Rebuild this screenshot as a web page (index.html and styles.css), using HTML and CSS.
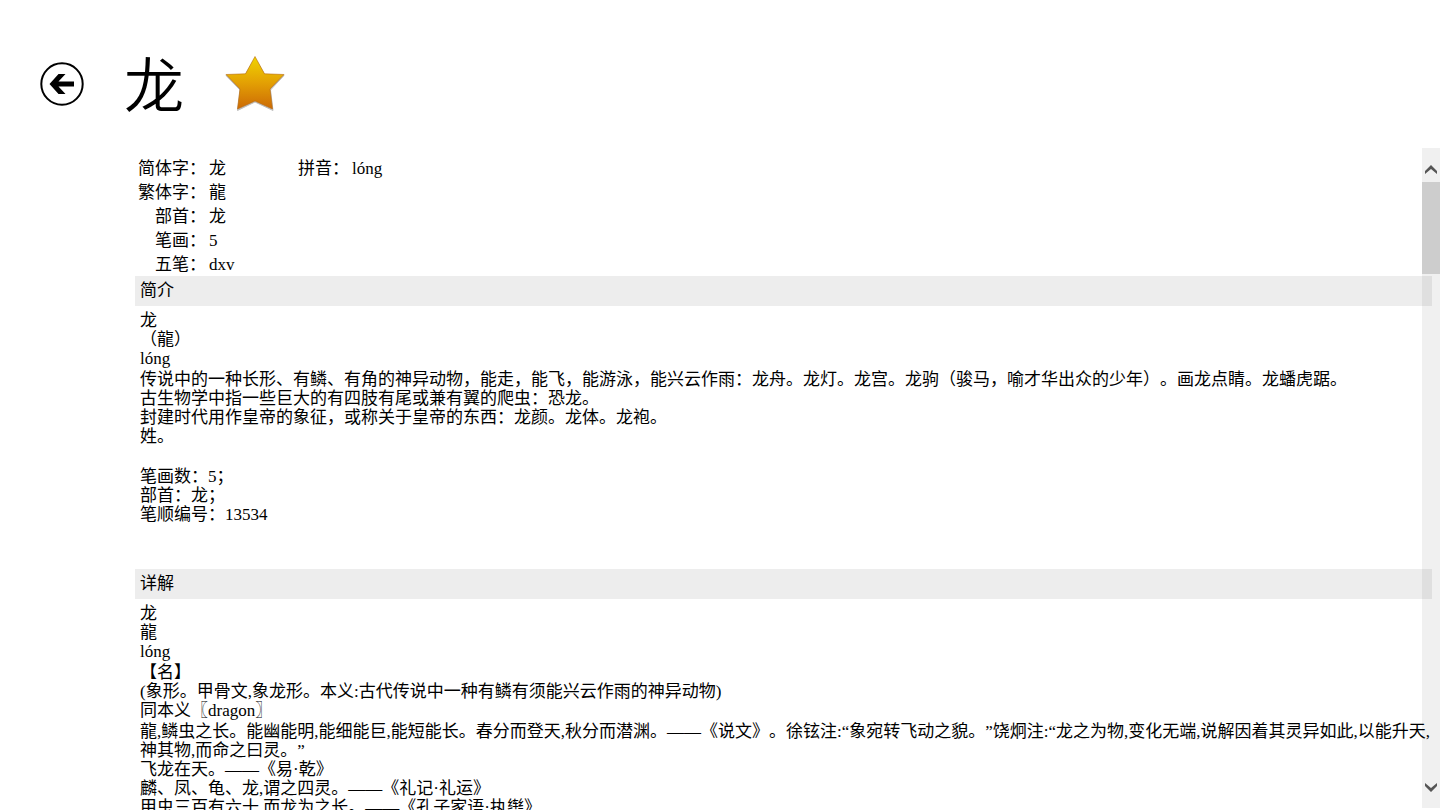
FILE: index.html
```html
<!DOCTYPE html>
<html lang="zh-CN">
<head>
    <meta charset="UTF-8">
    <meta name="viewport" content="width=device-width, initial-scale=1.0">
    <title>龙</title>
    <link rel="stylesheet" href="styles.css">
</head>
<body>
    <header class="page-header">
        <button class="icon-button" type="button" aria-label="返回">
            <svg width="44" height="44" viewBox="0 0 44 44">
                <circle cx="22" cy="22" r="20.7" fill="none" stroke="#000" stroke-width="2"/>
                <path d="M9.500 22 18.500 12H25.500L18.500 19.500H34V24.500H18.500L25.500 32H18.500Z"/>
            </svg>
        </button>
        <h1 class="page-title">龙</h1>
        <button class="icon-button" type="button" aria-label="收藏">
            <svg width="62" height="58" viewBox="0 0 62 58">
                <defs>
                    <linearGradient id="gold" x1="0" y1="0" x2="0" y2="1">
                        <stop offset="0" stop-color="#f0d400"/>
                        <stop offset="0.5" stop-color="#e3a004"/>
                        <stop offset="1" stop-color="#cc6a06"/>
                    </linearGradient>
                </defs>
                <path d="M31 3 41 20 60 20.500 46.500 35 49 55.500 31 47 13.500 55.500 16 35 2 20.500 21 20Z" fill="#000" opacity="0.25" stroke="#000" stroke-width="1" stroke-linejoin="round"/>
                <path d="M31 1.500 40.500 18.800 60 19.500 46 34 48.500 54 31 46 13.500 54 16 34 2 19.500 21.500 18.800Z" fill="url(#gold)" stroke="#b96a10" stroke-opacity="0.6" stroke-width="1" stroke-linejoin="round"/>
            </svg>
        </button>
    </header>

    <main class="content">
        <table class="info">
            <tr>
                <th>简体字：</th>
                <td>龙</td>
                <th>拼音：</th>
                <td>lóng</td>
            </tr>
            <tr>
                <th>繁体字：</th>
                <td>龍</td>
            </tr>
            <tr>
                <th>部首：</th>
                <td>龙</td>
            </tr>
            <tr>
                <th>笔画：</th>
                <td>5</td>
            </tr>
            <tr>
                <th>五笔：</th>
                <td>dxv</td>
            </tr>
        </table>

        <section class="entry">
            <h2>简介</h2>
            <div class="entry-text">
                <p>龙<br>（龍）<br>lóng</p>
                <p>传说中的一种长形、有鳞、有角的神异动物，能走，能飞，能游泳，能兴云作雨：龙舟。龙灯。龙宫。龙驹（骏马，喻才华出众的少年）。画龙点睛。龙蟠虎踞。<br>古生物学中指一些巨大的有四肢有尾或兼有翼的爬虫：恐龙。<br>封建时代用作皇帝的象征，或称关于皇帝的东西：龙颜。龙体。龙袍。<br>姓。</p>
                <p class="strokes">笔画数：5；<br>部首：龙；<br>笔顺编号：13534</p>
            </div>
        </section>

        <section class="entry">
            <h2>详解</h2>
            <div class="entry-text">
                <p>龙<br>龍<br>lóng</p>
                <p>【名】<br>(象形。甲骨文,象龙形。本义:古代传说中一种有鳞有须能兴云作雨的神异动物)<br>同本义〖dragon〗</p>
                <p>龍,鳞虫之长。能幽能明,能细能巨,能短能长。春分而登天,秋分而潜渊。——《说文》。徐铉注:“象宛转飞动之貌。”饶炯注:“龙之为物,变化无端,说解因着其灵异如此,以能升天,神其物,而命之曰灵。”<br>飞龙在天。——《易·乾》<br>麟、凤、龟、龙,谓之四灵。——《礼记·礼运》<br>甲虫三百有六十,而龙为之长。——《孔子家语·执辔》</p>
            </div>
        </section>

        <div class="scrollbar">
            <button class="scroll-button" type="button" aria-label="向上滚动">
                <svg width="12" height="10" viewBox="0 0 12 10"><path d="M0 9V6L6 0 12 6V9L6 4Z" fill="#555"/></svg>
            </button>
            <div class="scroll-thumb"></div>
            <button class="scroll-button scroll-down" type="button" aria-label="向下滚动">
                <svg width="12" height="10" viewBox="0 0 12 10"><path d="M0 1V4L6 10 12 4V1L6 6Z" fill="#555"/></svg>
            </button>
        </div>
    </main>
</body>
</html>
```
FILE: styles.css
```css
body {
    margin: 0;
    height: 100vh;
    display: flex;
    flex-direction: column;
    overflow: hidden;
    background-color: #fff;
    color: #000;
    font-family: "Liberation Serif", "Noto Sans CJK SC", serif;
    font-size: 17px;
    line-height: 19px;
    text-spacing-trim: space-all;
}
button {
    padding: 0;
    border: none;
    background: none;
    cursor: pointer;
}
svg {
    display: block;
}
.page-header {
    flex: none;
    display: flex;
    align-items: center;
    gap: 40px;
    box-sizing: border-box;
    height: 148px;
    padding: 20px 40px 0;
}
.page-title {
    margin: 0;
    padding-bottom: 4px;
    font-family: "Noto Sans CJK SC", sans-serif;
    font-size: 60px;
    font-weight: 350;
    line-height: 60px;
}
.content {
    flex: 1;
    min-height: 0;
    position: relative;
    overflow: hidden;
    padding: 8px 8px 0 135px;
}
.info {
    border-collapse: collapse;
}
.info th,
.info td {
    height: 24px;
    padding: 0 0 0 3px;
    text-align: left;
    font-weight: normal;
}
.info th {
    text-align: right;
}
.info td {
    min-width: 86px;
}
.entry h2 {
    margin: 0;
    padding: 0 5px;
    background-color: #ededed;
    font-size: 17px;
    font-weight: normal;
    line-height: 30px;
}
.entry-text {
    padding: 5px 0 43px 5px;
}
.entry-text p {
    margin: 0 0 2px;
}
.entry-text .strokes {
    margin-top: 21px;
}

/* lies over the right edge of the text */
.scrollbar {
    position: absolute;
    top: 0;
    right: 0;
    bottom: 2px;
    width: 18px;
    display: flex;
    flex-direction: column;
    background-color: rgba(0, 0, 0, 0.06);
}
.scroll-button {
    display: flex;
    justify-content: center;
    align-items: flex-end;
    height: 34px;
    padding-bottom: 7px;
}
.scroll-thumb {
    height: 92px;
    background-color: #cdcdcd;
}
.scroll-down {
    margin-top: auto;
    padding-bottom: 16px;
}
```
